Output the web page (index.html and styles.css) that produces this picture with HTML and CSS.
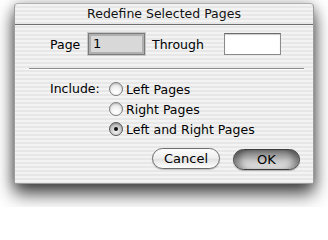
FILE: index.html
```html
<!DOCTYPE html>
<html>
<head>
<meta charset="utf-8">
<link rel="stylesheet" href="styles.css">
</head>
<body>
<div class="window">
  <div class="titlebar">Redefine Selected Pages</div>
  <div class="content">
    <div class="range-row">
      <span class="label page-label">Page</span>
      <div class="field field-focus">1</div>
      <span class="label through-label">Through</span>
      <div class="field"></div>
    </div>
    <div class="separator"></div>
    <div class="include">
      <span class="label include-label">Include:</span>
      <div class="options">
        <div class="option"><span class="radio"></span><span class="label">Left Pages</span></div>
        <div class="option"><span class="radio"></span><span class="label">Right Pages</span></div>
        <div class="option"><span class="radio checked"><span class="dot"></span></span><span class="label">Left and Right Pages</span></div>
      </div>
    </div>
    <div class="buttons">
      <div class="button cancel">Cancel</div>
      <div class="button ok">OK</div>
    </div>
  </div>
</div>
</body>
</html>
```

FILE: styles.css
```css
html, body {
  margin: 0;
  padding: 0;
  background: #ffffff;
}
body {
  width: 328px;
  height: 207px;
  overflow: hidden;
  font-family: "DejaVu Sans", "Liberation Sans", sans-serif;
  font-size: 12px;
  color: #000;
}
.window {
  margin: 3px 0 0 14px;
  width: 300px;
  height: 181px;
  box-sizing: border-box;
  border: 1px solid #9c9c9c;
  border-top-color: #b0b0b0;
  border-radius: 4px 4px 0 0;
  background: repeating-linear-gradient(to bottom, #f3f3f3 0, #f3f3f3 2px, #e7e7e7 2px, #e7e7e7 4px);
  box-shadow: 0 10px 18px rgba(0,0,0,0.7), 0 2px 12px rgba(0,0,0,0.3);
  display: flex;
  flex-direction: column;
}
.titlebar {
  height: 20px;
  border-bottom: 1px solid #6e6e6e;
  text-align: center;
  line-height: 20px;
  font-size: 12.5px;
  color: #111;
}
.content {
  flex: 1;
  display: flex;
  flex-direction: column;
  padding: 8px 0 0 7px;
}
.range-row {
  display: flex;
  align-items: center;
  height: 22px;
}
.label {
  font-size: 12.5px;
  white-space: nowrap;
}
.page-label {
  margin-left: 28px;
  width: 38px;
}
.field {
  width: 57px;
  height: 22px;
  box-sizing: border-box;
  background: #ffffff;
  border: 1px solid #8a8a8a;
  border-top-color: #6a6a6a;
  box-shadow: inset 0 1px 1px rgba(0,0,0,0.2);
  font-size: 13px;
  line-height: 20px;
  padding-left: 4px;
}
.field-focus {
  background: #d8d8d8;
  border: 1px solid #7a7a7a;
  box-shadow: 0 0 0 1px #c8c8c8, inset 0 0 0 2px #b0b0b0;
  padding-left: 4px;
}
.through-label {
  margin-left: 7px;
  width: 72px;
}
.separator {
  margin: 13px 9px 0 7px;
  height: 0;
  border-top: 1px solid #8c8c8c;
  border-bottom: 1px solid #ffffff;
}
.include {
  display: flex;
  margin-top: 11px;
}
.include-label {
  margin-left: 28px;
  width: 59px;
  line-height: 16px;
}
.options {
  display: flex;
  flex-direction: column;
  gap: 4px;
}
.option {
  display: flex;
  align-items: center;
  height: 16px;
  gap: 3px;
}
.radio {
  width: 14px;
  height: 14px;
  box-sizing: border-box;
  border-radius: 50%;
  border: 1px solid #7c7c7c;
  background: radial-gradient(circle at 50% 75%, #ffffff 0, #f4f4f4 40%, #cfcfcf 100%);
  box-shadow: inset 0 1px 1px rgba(0,0,0,0.15);
  display: flex;
  align-items: center;
  justify-content: center;
}
.radio.checked {
  border-color: #5a5a5a;
  background: radial-gradient(circle at 50% 70%, #f2f2f2 0, #c2c2c2 60%, #8c8c8c 100%);
}
.dot {
  width: 4px;
  height: 4px;
  border-radius: 50%;
  background: #111;
}
.buttons {
  display: flex;
  justify-content: flex-end;
  gap: 13px;
  margin-top: 11px;
  margin-right: 13px;
}
.button {
  height: 21px;
  box-sizing: border-box;
  border-radius: 11px;
  text-align: center;
  line-height: 19px;
  font-size: 13px;
}
.cancel {
  width: 68px;
  border: 1px solid #6c6c6c;
  background: linear-gradient(to bottom, #fdfdfd 0%, #f0f0f0 45%, #e2e2e2 55%, #ffffff 100%);
  box-shadow: 0 1px 1px rgba(0,0,0,0.2);
}
.ok {
  width: 67px;
  margin-top: 1px;
  border: 1px solid #3c3c3c;
  background: linear-gradient(to bottom, #7a7a7a 0%, #a4a4a4 35%, #c4c4c4 55%, #ececec 100%);
  box-shadow: inset 8px 0 7px -3px rgba(0,0,0,0.4), inset -8px 0 7px -3px rgba(0,0,0,0.4), 0 1px 1px rgba(0,0,0,0.25);
}
```
